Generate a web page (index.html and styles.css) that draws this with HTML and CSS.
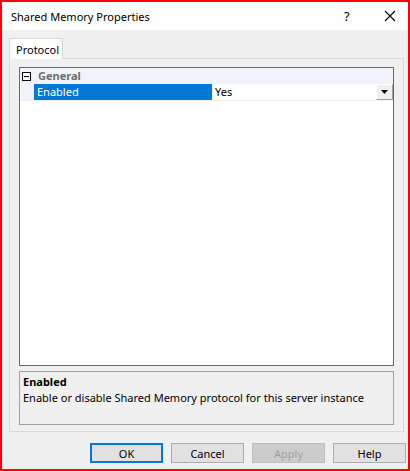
FILE: index.html
```html
<!DOCTYPE html>
<html lang="en">
<head>
    <meta charset="UTF-8">
    <meta name="viewport" content="width=device-width, initial-scale=1.0">
    <title>Shared Memory Properties</title>
    <link rel="stylesheet" href="styles.css">
</head>
<body>

<div class="window">
    <!-- Title bar -->
    <div class="titlebar">
        <span class="title">Shared Memory Properties</span>
        <span class="help-btn">?</span>
        <span class="close-btn">
            <svg width="12" height="12" viewBox="0 0 12 12">
                <path d="M1 1 L11 11 M11 1 L1 11" stroke="#000" stroke-width="1.1" fill="none"/>
            </svg>
        </span>
    </div>

    <div class="dialog-body">
        <div class="tabs">
            <div class="tab active">Protocol</div>
        </div>
        <div class="tab-page">
            <!-- Property grid -->
            <div class="property-grid">
                <div class="grid-row category">
                    <div class="margin-cell">
                        <span class="expander"></span>
                    </div>
                    <div class="category-name">General</div>
                </div>
                <div class="grid-row">
                    <div class="margin-cell"></div>
                    <div class="prop-name selected">Enabled</div>
                    <div class="prop-value">
                        <span>Yes</span>
                        <span class="dropdown-btn">
                            <svg width="7" height="4" viewBox="0 0 7 4">
                                <path d="M0 0 H7 L3.5 4 Z" fill="#000"/>
                            </svg>
                        </span>
                    </div>
                </div>
            </div>
            <!-- Description pane -->
            <div class="description">
                <div class="desc-title">Enabled</div>
                <div class="desc-text">Enable or disable Shared Memory protocol for this server instance</div>
            </div>
        </div>

        <div class="buttons">
            <button class="btn default">OK</button>
            <button class="btn">Cancel</button>
            <button class="btn" disabled>Apply</button>
            <button class="btn">Help</button>
        </div>
    </div>
</div>

</body>
</html>
```

FILE: styles.css
```css
body {
    margin: 0;
    font-family: 'Noto Sans', 'Open Sans', sans-serif;
    font-size: 11px;
    color: #000;
}

.window {
    width: 410px;
    height: 471px;
    box-sizing: border-box;
    border: 2px solid #ff0000;
    display: flex;
    flex-direction: column;
    background-color: #f0f0f0;
}

.titlebar {
    height: 28px;
    background-color: #fff;
    display: flex;
    align-items: center;
    padding-left: 9px;
}

.title {
    flex: 1;
}

.help-btn {
    width: 14px;
    margin-right: 26px;
    font-size: 13px;
}

.close-btn {
    display: flex;
    margin-right: 12px;
}

.dialog-body {
    flex: 1;
    padding: 8px 4px 0 7px;
}

.tabs {
    display: flex;
    height: 20px;
}

.tab {
    width: 54px;
    box-sizing: border-box;
    border: 1px solid #d9d9d9;
    border-bottom: none;
    background-color: #fff;
    padding: 3px 0 0 6px;
    position: relative;
    z-index: 1;
    height: 21px;
}

.tab-page {
    height: 374px;
    box-sizing: border-box;
    border: 1px solid #d9d9d9;
    padding: 8px 9px 0 9px;
}

.property-grid {
    height: 299px;
    box-sizing: border-box;
    border: 1px solid #696969;
    background-color: #fff;
}

.grid-row {
    display: flex;
    height: 16px;
    line-height: 16px;
    border-bottom: 1px solid #f0f0f0;
}

.grid-row.category {
    background-color: #f0f4fa;
    border-bottom: none;
}

.margin-cell {
    width: 14px;
    box-sizing: border-box;
    background-color: #f0f4fa;
    display: flex;
    align-items: center;
    padding-left: 2px;
}

.expander {
    width: 7px;
    height: 7px;
    border: 1px solid #000;
    background-color: #fff;
    position: relative;
}

.expander::after {
    content: '';
    position: absolute;
    left: 1px;
    right: 1px;
    top: 3px;
    height: 1px;
    background-color: #000;
}

.category-name {
    font-weight: bold;
    color: #6d6d6d;
    padding-left: 4px;
}

.prop-name {
    width: 179px;
    box-sizing: border-box;
    padding-left: 3px;
    border-right: 1px solid #f0f0f0;
}

.prop-name.selected {
    background-color: #0078d7;
    color: #fff;
}

.prop-value {
    flex: 1;
    display: flex;
    justify-content: space-between;
    padding-left: 2px;
}

.dropdown-btn {
    width: 17px;
    height: 16px;
    box-sizing: border-box;
    border: 1px solid #a0a0a0;
    border-top-color: #fff;
    border-left-color: #fff;
    background-color: #f0f0f0;
    display: flex;
    align-items: center;
    justify-content: center;
}

.description {
    margin-top: 5px;
    height: 54px;
    box-sizing: border-box;
    border: 1px solid #a0a0a0;
    padding: 2px 3px;
}

.desc-title {
    font-weight: bold;
    line-height: 15px;
}

.desc-text {
    line-height: 18px;
}

.buttons {
    display: flex;
    justify-content: flex-end;
    gap: 8px;
    margin-top: 11px;
    margin-right: -2px;
}

.btn {
    width: 73px;
    height: 20px;
    box-sizing: border-box;
    font-family: inherit;
    font-size: 11px;
    background-color: #e1e1e1;
    border: 1px solid #adadad;
    padding: 0;
    color: #000;
}

.btn.default {
    border: 2px solid #0078d7;
}

.btn:disabled {
    background-color: #cccccc;
    border-color: #bfbfbf;
    color: #a0a0a0;
}
```
